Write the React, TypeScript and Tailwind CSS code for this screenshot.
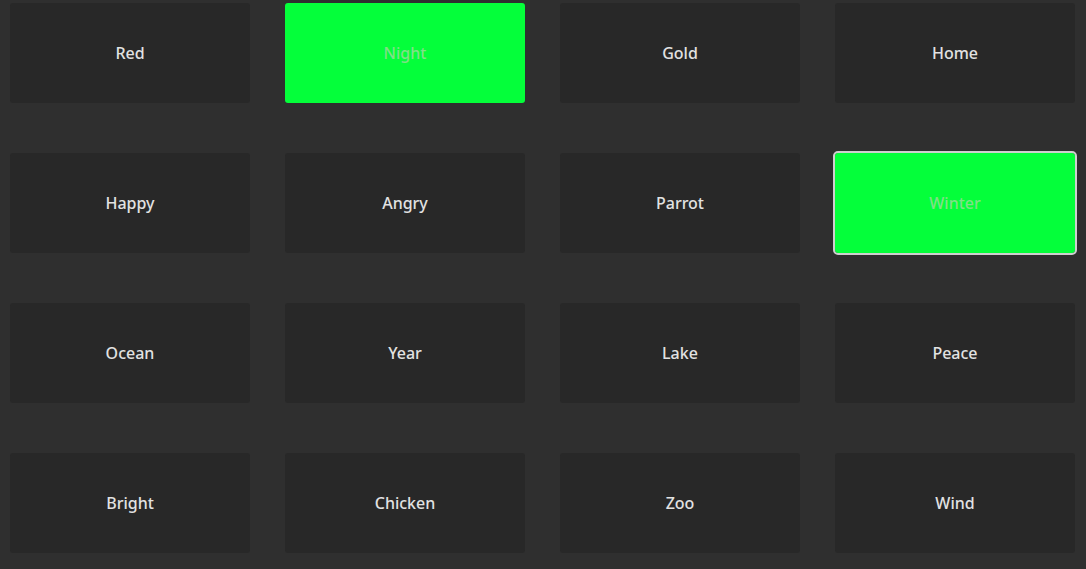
import React from "react";

const words = [
  "Red", "Night", "Gold", "Home",
  "Happy", "Angry", "Parrot", "Winter",
  "Ocean", "Year", "Lake", "Peace",
  "Bright", "Chicken", "Zoo", "Wind",
];

const active = new Set(["Night", "Winter"]);
const outlined = new Set(["Winter"]);

export default function App() {
  return (
    <div
      className="w-[1086px] h-[569px] overflow-hidden bg-[#2f2f2f] pt-[3px] pl-[10px]"
      style={{ fontFamily: '"Noto Sans", "Open Sans", sans-serif' }}
    >
      <div className="grid grid-cols-[repeat(4,240px)] gap-x-[35px] gap-y-[50px]">
        {words.map((w) => {
          const on = active.has(w);
          const ring = outlined.has(w);
          return (
            <div
              key={w}
              className={
                on
                  ? ring
                    ? "h-[100px] rounded-[3px] bg-[#04ff3a] flex items-center justify-center text-[16px] font-medium text-[#80e088] outline-2 outline-[#cfcfcf]"
                    : "h-[100px] rounded-[3px] bg-[#04ff3a] flex items-center justify-center text-[16px] font-medium text-[#80e088]"
                  : "h-[100px] rounded-[3px] bg-[#282828] flex items-center justify-center text-[16px] font-medium text-[#e2e2e2]"
              }
            >
              {w}
            </div>
          );
        })}
      </div>
    </div>
  );
}
